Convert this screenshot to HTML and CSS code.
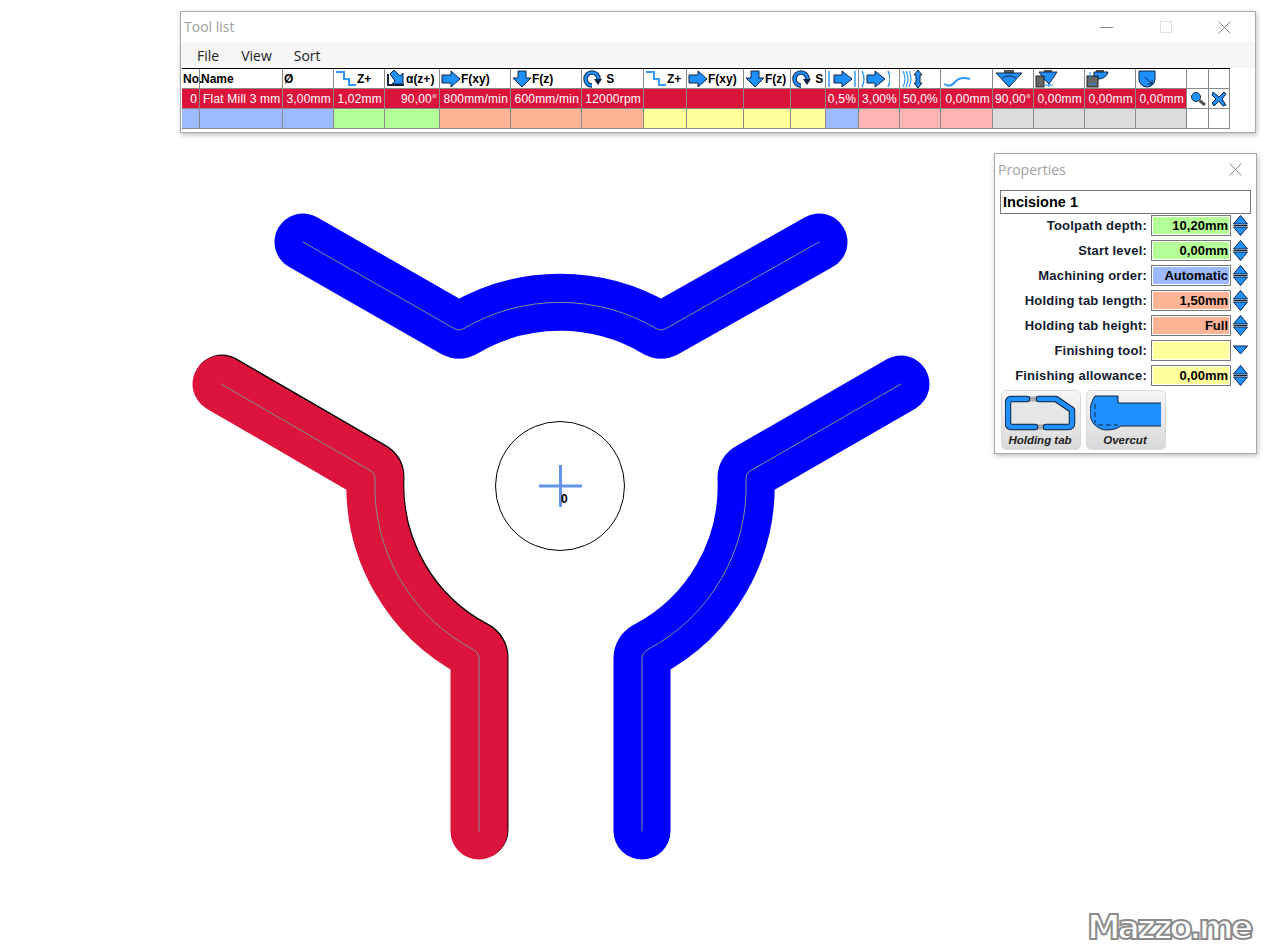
FILE: index.html
```html
<!DOCTYPE html>
<html lang="en">
<head>
  <meta charset="UTF-8">
  <title>Tool list</title>
  <link rel="stylesheet" href="styles.css">
</head>
<body>

  <!-- icon set -->
  <svg class="defs" width="0" height="0">
    <symbol id="step" viewBox="0 0 22 18"><path d="M1 2H9V9H14V15H21" fill="none" stroke="#2f9bf5" stroke-width="2"/></symbol>
    <symbol id="angle" viewBox="0 0 20 18"><path d="M2 4V15H18" fill="none" stroke="#10243f" stroke-width="2"/><path d="M4 4L8 0L14 6L17 3V14H6L9 11Z" fill="#1e90ff" stroke="#10243f"/></symbol>
    <symbol id="right" viewBox="0 0 20 18"><path d="M1 5H10V1L19 9L10 17V13H1Z" fill="#1e90ff" stroke="#10243f"/></symbol>
    <symbol id="down" viewBox="0 0 20 18"><path d="M6 1H14V8H19L10 17L1 8H6Z" fill="#1e90ff" stroke="#10243f"/></symbol>
    <symbol id="spin" viewBox="0 0 18 18"><path d="M8 15.5A6.5 6.5 0 1 1 14.5 9" fill="none" stroke="#10243f" stroke-width="4.5"/><path d="M8 15.5A6.5 6.5 0 1 1 14.5 9" fill="none" stroke="#1e90ff" stroke-width="2.5"/><path d="M10 9H18L14 15Z" fill="#10243f"/></symbol>
    <symbol id="cross" viewBox="0 0 30 18"><path d="M2 1V17M28 1V17" stroke="#2f9bf5" stroke-width="1.5" fill="none"/><path d="M7 5H15V1L25 9L15 17V13H7Z" fill="#1e90ff" stroke="#10243f"/></symbol>
    <symbol id="climb" viewBox="0 0 30 18"><path d="M2 1Q6 9 2 17M28 1Q32 9 28 17" stroke="#2f9bf5" stroke-width="1.5" fill="none"/><path d="M7 5H15V1L25 9L15 17V13H7Z" fill="#1e90ff" stroke="#10243f"/></symbol>
    <symbol id="depth" viewBox="0 0 22 18"><path d="M2 1Q6 9 2 17M5 1Q9 9 5 17M8 1Q12 9 8 17" stroke="#2f9bf5" stroke-width="1.2" fill="none"/><path d="M17 0L21 5H19V13H21L17 18L13 13H15V5H13Z" fill="#1e90ff" stroke="#10243f"/></symbol>
    <symbol id="wave" viewBox="0 0 28 18"><path d="M1 14Q7 18 12 12T27 9" fill="none" stroke="#2f9bf5" stroke-width="2"/></symbol>
    <symbol id="vee" viewBox="0 0 28 18"><rect x="9" y="0" width="10" height="3" fill="#555"/><path d="M1 3H27L14 17Z" fill="#1e90ff" stroke="#10243f"/><path d="M7 8Q14 4 21 8" fill="none" stroke="#10243f"/></symbol>
    <symbol id="side" viewBox="0 0 24 18"><rect x="1" y="6" width="8" height="11" fill="#666" stroke="#222"/><rect x="9" y="0" width="8" height="2" fill="#555"/><path d="M4 2H22L14 14L9 9V6H7Z" fill="#1e90ff" stroke="#10243f"/><path d="M14 14V17M10 15H18" stroke="#1e90ff"/></symbol>
    <symbol id="side2" viewBox="0 0 24 18"><rect x="1" y="6" width="11" height="11" fill="#666" stroke="#222"/><rect x="10" y="0" width="8" height="2" fill="#555"/><path d="M8 2H22Q20 9 12 9V6H8Z" fill="#1e90ff" stroke="#10243f"/><path d="M4 2V8M3 14H10" stroke="#1e90ff"/></symbol>
    <symbol id="corner" viewBox="0 0 18 18"><path d="M1 1H17V9A8 8 0 0 1 1 9Z" fill="#1e90ff" stroke="#10243f"/><path d="M7 7L14 14M14 10V14H10" fill="none" stroke="#10243f"/></symbol>
    <symbol id="search" viewBox="0 0 16 16"><circle cx="6" cy="6" r="4.5" fill="#1e90ff" stroke="#234"/><path d="M9.5 9.5L15 14" stroke="#555" stroke-width="3"/></symbol>
    <symbol id="drop" viewBox="0 0 16 16"><path d="M2 1L8 6L13 1L15 3L11 8L15 14L12 15L8 10L3 15L1 12L5 8L1 4Z" fill="#1e90ff" stroke="#10243f"/></symbol>
    <symbol id="updown" viewBox="0 0 15 21"><path d="M7.5 0.5L14.5 9H0.5Z" fill="#1e90ff" stroke="#10243f"/><path d="M0.5 10.5H14.5" stroke="#10243f"/><path d="M0.5 12H14.5L7.5 20.5Z" fill="#1e90ff" stroke="#10243f"/></symbol>
    <symbol id="downonly" viewBox="0 0 15 21"><path d="M0.5 6H14.5L7.5 14Z" fill="#1e90ff" stroke="#10243f"/></symbol>
    <symbol id="tab" viewBox="0 0 71 34">
      <path d="M3 7Q3 3 7 3H50L67 14V27Q67 31 63 31H7Q3 31 3 27Z" fill="#e6e6e6"/>
      <path d="M22 3H34M30 31H41" stroke="#aaa" stroke-width="5"/>
      <path d="M22 3H7Q3 3 3 7V27Q3 31 7 31H30M34 3H51L67 14V27Q67 31 63 31H41" fill="none" stroke="#10243f" stroke-width="6.5" stroke-linecap="round" stroke-linejoin="round"/>
      <path d="M22 3H7Q3 3 3 7V27Q3 31 7 31H30M34 3H51L67 14V27Q67 31 63 31H41" fill="none" stroke="#1e90ff" stroke-width="4.5" stroke-linecap="round" stroke-linejoin="round"/>
    </symbol>
    <symbol id="over" viewBox="0 0 71 36">
      <path d="M5 1H28V8H71V31H31Q26 35 17 35A17 17 0 0 1 0 18Q0 8 5 1Z" fill="#1e90ff"/>
      <path d="M5 1H28V8H71M71 31H31Q26 35 17 35A17 17 0 0 1 0 18Q0 8 5 1" fill="none" stroke="#10243f"/>
      <path d="M5 9V28M8 30H28" stroke="#10243f" stroke-dasharray="5 3" fill="none"/>
    </symbol>
  </svg>

  <!-- Workspace -->
  <svg class="canvas" width="1269" height="951" viewBox="0 0 1269 951">
    <defs>
      <path id="pathTop" d="M303 242L455 329Q459 331 463 329A190 190 0 0 1 657 329Q661 331 665 329L819 242"/>
      <path id="pathLeft" d="M221 384L371 471Q375 473 375 478A185 185 0 0 0 474 650Q479 653 479 658V831"/>
      <path id="pathRight" d="M901 384L750 471Q746 473 746 478A185 185 0 0 1 647 650Q642 653 642 658V831"/>
    </defs>
    <g class="edge" transform="translate(1 -1)">
      <use href="#pathLeft"/>
    </g>
    <g class="cut cut-blue"><use href="#pathTop"/><use href="#pathRight"/></g>
    <g class="cut cut-red"><use href="#pathLeft"/></g>
    <g class="centre">
      <use href="#pathTop"/><use href="#pathLeft"/><use href="#pathRight"/>
    </g>
    <circle class="origin" cx="560" cy="486" r="64.5"/>
    <path class="cross" d="M539 486H582M560.5 465V507"/>
    <text class="origin-label" x="561" y="503">0</text>
  </svg>

  <!-- Tool list window -->
  <div class="window tool-list">
    <div class="titlebar">
      <span class="title">Tool list</span>
      <div class="win-btns">
        <span class="win-btn"><i class="min"></i></span>
        <span class="win-btn"><i class="max"></i></span>
        <span class="win-btn"><svg width="13" height="13"><path d="M0.5 0.5L12.5 12.5M12.5 0.5L0.5 12.5" stroke="#8a8a8a"/></svg></span>
      </div>
    </div>
    <div class="menubar"><span>File</span><span>View</span><span>Sort</span></div>
    <div class="grid">
      <div class="th">No.</div>
      <div class="th">Name</div>
      <div class="th">Ø</div>
      <div class="th"><svg class="ic w22"><use href="#step"/></svg>Z+</div>
      <div class="th"><svg class="ic"><use href="#angle"/></svg>α(z+)</div>
      <div class="th"><svg class="ic"><use href="#right"/></svg>F(xy)</div>
      <div class="th"><svg class="ic"><use href="#down"/></svg>F(z)</div>
      <div class="th"><svg class="ic"><use href="#spin"/></svg>&nbsp;S</div>
      <div class="th"><svg class="ic w22"><use href="#step"/></svg>Z+</div>
      <div class="th"><svg class="ic"><use href="#right"/></svg>F(xy)</div>
      <div class="th"><svg class="ic"><use href="#down"/></svg>F(z)</div>
      <div class="th"><svg class="ic"><use href="#spin"/></svg>&nbsp;S</div>
      <div class="th"><svg class="ic w30"><use href="#cross"/></svg></div>
      <div class="th"><svg class="ic w30"><use href="#climb"/></svg></div>
      <div class="th"><svg class="ic w22"><use href="#depth"/></svg></div>
      <div class="th"><svg class="ic w28"><use href="#wave"/></svg></div>
      <div class="th"><svg class="ic w28"><use href="#vee"/></svg></div>
      <div class="th"><svg class="ic w24"><use href="#side"/></svg></div>
      <div class="th"><svg class="ic w24"><use href="#side2"/></svg></div>
      <div class="th"><svg class="ic"><use href="#corner"/></svg></div>
      <div class="th"></div>
      <div class="th"></div>

      <div class="td num">0</div>
      <div class="td">Flat Mill 3 mm</div>
      <div class="td num">3,00mm</div>
      <div class="td num">1,02mm</div>
      <div class="td num">90,00°</div>
      <div class="td num">800mm/min</div>
      <div class="td num">600mm/min</div>
      <div class="td num">12000rpm</div>
      <div class="td"></div>
      <div class="td"></div>
      <div class="td"></div>
      <div class="td"></div>
      <div class="td num">0,5%</div>
      <div class="td num">3,00%</div>
      <div class="td num">50,0%</div>
      <div class="td num">0,00mm</div>
      <div class="td num">90,00°</div>
      <div class="td num">0,00mm</div>
      <div class="td num">0,00mm</div>
      <div class="td num">0,00mm</div>
      <div class="td plain"><svg class="tool-ic"><use href="#search"/></svg></div>
      <div class="td plain"><svg class="tool-ic"><use href="#drop"/></svg></div>

      <div class="tc c-blue"></div><div class="tc c-blue"></div><div class="tc c-blue"></div>
      <div class="tc c-green"></div><div class="tc c-green"></div>
      <div class="tc c-orange"></div><div class="tc c-orange"></div><div class="tc c-orange"></div>
      <div class="tc c-yellow"></div><div class="tc c-yellow"></div><div class="tc c-yellow"></div><div class="tc c-yellow"></div>
      <div class="tc c-blue"></div>
      <div class="tc c-pink"></div><div class="tc c-pink"></div><div class="tc c-pink"></div>
      <div class="tc c-grey"></div><div class="tc c-grey"></div><div class="tc c-grey"></div><div class="tc c-grey"></div>
      <div class="tc"></div><div class="tc"></div>
    </div>
  </div>

  <!-- Properties window -->
  <div class="window properties">
    <div class="titlebar prop-title">
      <span class="title">Properties</span>
      <span class="win-btn"><svg width="13" height="13"><path d="M0.5 0.5L12.5 12.5M12.5 0.5L0.5 12.5" stroke="#8a8a8a"/></svg></span>
    </div>
    <div class="prop-body">
      <div class="name-box">Incisione 1</div>
      <div class="prop-row"><label>Toolpath depth:</label><div class="val c-green">10,20mm</div><svg class="spin"><use href="#updown"/></svg></div>
      <div class="prop-row"><label>Start level:</label><div class="val c-green">0,00mm</div><svg class="spin"><use href="#updown"/></svg></div>
      <div class="prop-row"><label>Machining order:</label><div class="val c-blue">Automatic</div><svg class="spin"><use href="#updown"/></svg></div>
      <div class="prop-row"><label>Holding tab length:</label><div class="val c-orange">1,50mm</div><svg class="spin"><use href="#updown"/></svg></div>
      <div class="prop-row"><label>Holding tab height:</label><div class="val c-orange">Full</div><svg class="spin"><use href="#updown"/></svg></div>
      <div class="prop-row"><label>Finishing tool:</label><div class="val c-yellow"></div><svg class="spin"><use href="#downonly"/></svg></div>
      <div class="prop-row"><label>Finishing allowance:</label><div class="val c-yellow">0,00mm</div><svg class="spin"><use href="#updown"/></svg></div>
      <div class="big-btns">
        <div class="big-btn"><svg class="big-ic"><use href="#tab"/></svg><span>Holding tab</span></div>
        <div class="big-btn"><svg class="big-ic"><use href="#over"/></svg><span>Overcut</span></div>
      </div>
    </div>
  </div>

  <div class="watermark">Mazzo.me</div>

</body>
</html>
```

FILE: styles.css
```css
* { box-sizing: border-box; margin: 0; padding: 0; }

body {
  position: relative;
  width: 1269px;
  height: 951px;
  overflow: hidden;
  background: #fff;
  font-family: 'Liberation Sans', Arial, sans-serif;
  color: #000;
}

.defs { position: absolute; }

/* Workspace */
.canvas {
  position: absolute;
  left: 0;
  top: 0;
}

.canvas use { fill: none; stroke-linejoin: round; stroke-linecap: round; }
.edge use { stroke: #000; stroke-width: 57px; }
.cut use { stroke-width: 57px; }
.cut-blue use { stroke: #0000ff; }
.cut-red use { stroke: #dc143c; }
.centre use { stroke: #7f9090; stroke-width: 1px; }

.origin { fill: none; stroke: #000; stroke-width: 1; }
.cross { fill: none; stroke: #6495ed; stroke-width: 3; }
.origin-label { font-size: 12px; font-weight: bold; }

/* Windows */
.window {
  position: absolute;
  background: #fff;
  border: 1px solid #a8a8a8;
  box-shadow: 1px 2px 5px rgba(0, 0, 0, 0.25);
}

.tool-list {
  left: 180px;
  top: 11px;
  width: 1076px;
  height: 122px;
}

.titlebar {
  display: flex;
  align-items: center;
  justify-content: space-between;
  height: 30px;
  padding-left: 3px;
}

.title {
  font-family: 'Open Sans', sans-serif;
  font-size: 14px;
  color: #a2a2a2;
  margin-top: -2px;
}

.prop-title .title { margin-top: 0; }

.win-btns { display: flex; margin-right: 1px; }

.win-btn {
  display: flex;
  align-items: center;
  justify-content: center;
  width: 59px;
  height: 30px;
}

.min { display: block; width: 13px; height: 1px; background: #8a8a8a; }
.max { display: block; width: 12px; height: 12px; border: 1px solid #dedede; }

.menubar {
  display: flex;
  gap: 22px;
  align-items: center;
  height: 26px;
  padding: 1px 0 0 16px;
  background: #f6f6f6;
  font-family: 'Open Sans', sans-serif;
  font-size: 14px;
  color: #222;
}

.grid {
  display: grid;
  grid-template-columns: 18px 83px 51px 51px 55px 71px 71px 62px 43px 57px 47px 35px 33px 41px 41px 52px 41px 51px 51px 51px 22px 21px;
  grid-template-rows: 20px 20px 20px;
  width: 1048px;
  margin-left: 1px;
  border-top: 1px solid #000;
  font-size: 12px;
}

.th, .td, .tc {
  display: flex;
  align-items: center;
  border-right: 1px solid #8a8a8a;
  border-bottom: 1px solid #8a8a8a;
  white-space: nowrap;
}

.th { font-weight: bold; padding-left: 1px; }
.td { background: #dc143c; color: #fff; padding: 0 2px 0 3px; letter-spacing: 0.2px; }
.td.num { justify-content: flex-end; }
.td.plain { background: #fff; padding: 0; justify-content: center; }

.ic { width: 20px; height: 18px; flex: none; }
.ic.w22 { width: 22px; }
.ic.w24 { width: 24px; }
.ic.w28 { width: 28px; margin-left: 1px; }
.ic.w30 { width: 30px; }
.tool-ic { width: 16px; height: 16px; }

.c-blue { background: #9db9ff; }
.c-green { background: #b4ff96; }
.c-orange { background: #ffb496; }
.c-yellow { background: #ffff9b; }
.c-pink { background: #ffb4b4; }
.c-grey { background: #dcdcdc; }

/* Properties */
.properties {
  left: 994px;
  top: 153px;
  width: 263px;
  height: 301px;
}

.prop-title { height: 31px; padding-right: 0; }
.prop-title .win-btn { width: 42px; height: 31px; }

.prop-body {
  display: flex;
  flex-direction: column;
  padding: 5px 5px 0;
}

.name-box {
  height: 24px;
  border: 1px solid #777;
  padding: 3px 0 0 2px;
  font-size: 14.5px;
  line-height: 17px;
  font-weight: bold;
}

.prop-row {
  display: flex;
  align-items: center;
  height: 25px;
  padding-bottom: 2px;
  font-size: 13px;
  font-weight: bold;
  color: #111a2c;
}

.prop-row label {
  flex: 1;
  text-align: right;
  padding-right: 4px;
  letter-spacing: 0.2px;
}

.val {
  width: 80px;
  height: 21px;
  border: 1px solid #777;
  box-shadow: inset 0 0 0 1px #fff;
  padding: 2px 2px 0 0;
  text-align: right;
  font-size: 13px;
  color: #000;
}

.spin { width: 15px; height: 21px; margin: 0 3px 0 2px; flex: none; }

.big-btns {
  display: flex;
  gap: 5px;
  margin-top: 1px;
  padding-left: 1px;
}

.big-btn {
  display: flex;
  flex-direction: column;
  align-items: center;
  width: 80px;
  height: 60px;
  padding: 4px 2px 0 0;
  border: 1px solid #d8d8d8;
  border-radius: 5px;
  background: linear-gradient(#f6f6f6, #d9d9d9);
  font-size: 11.5px;
  font-style: italic;
  font-weight: bold;
  color: #222;
}

.big-ic { width: 71px; height: 36px; flex: none; }
.big-btn span { margin-top: 3px; }

/* Watermark */
.watermark {
  position: absolute;
  right: 19px;
  bottom: 4px;
  font-family: 'DejaVu Sans', sans-serif;
  font-size: 34px;
  font-weight: bold;
  letter-spacing: -3.5px;
  color: #fff;
  -webkit-text-stroke: 2px #8c8c8c;
}
```
